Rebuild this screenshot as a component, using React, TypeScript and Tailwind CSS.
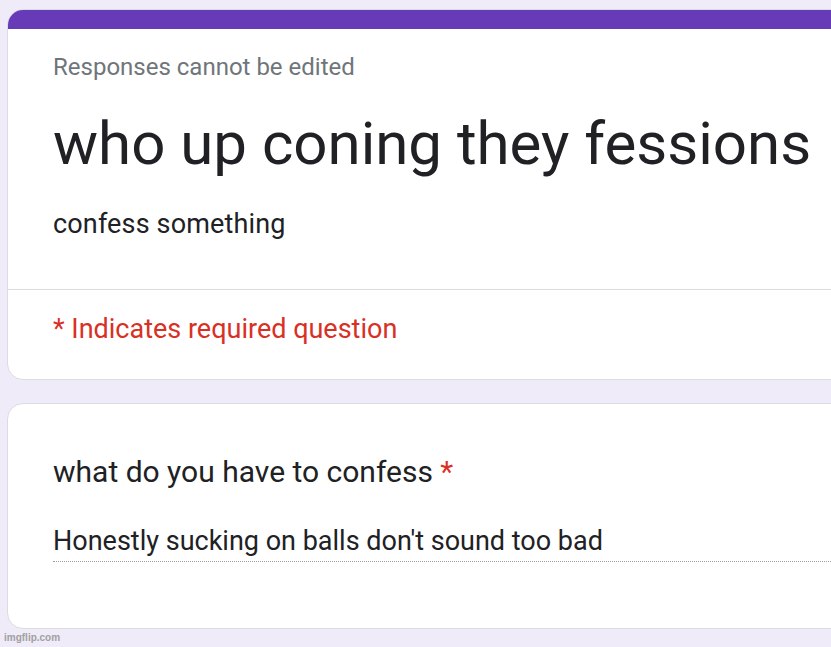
export default function App() {
  return (
    <div
      className="relative w-[831px] h-[647px] overflow-hidden bg-[#f0ebf8]"
      style={{ fontFamily: "Roboto, 'Liberation Sans', sans-serif" }}
    >
      <div className="pt-[9px] pl-[7px]">
        {/* header card */}
        <div className="w-[900px] rounded-2xl border border-[#dadce0] bg-white overflow-hidden">
          <div className="h-[19px] bg-[#673ab7]" />
          <div className="pl-[45px] pt-[26px]">
            <div className="text-[24px] leading-none text-[#70757a]">
              Responses cannot be edited
            </div>
            <h1 className="mt-[35px] text-[60px] leading-none text-[#202124]">
              who up coning they fessions
            </h1>
            <p className="mt-[37px] text-[27px] tracking-[0.15px] leading-none text-[#202124]">
              confess something
            </p>
          </div>
          <div className="mt-[51px] border-t border-[#dadce0]" />
          <div className="pl-[45px] pt-[26px] pb-[36px] text-[27px] leading-none text-[#d93025]">
            * Indicates required question
          </div>
        </div>

        {/* question card */}
        <div className="mt-[23px] w-[900px] rounded-2xl border border-[#dadce0] bg-white pl-[45px] pt-[53px] pb-[66px]">
          <div className="text-[30px] leading-none text-[#202124]">
            what do you have to confess{" "}
            <span className="text-[#d93025]">*</span>
          </div>
          <div className="mt-[41px] w-[830px] border-b border-dotted border-[#9aa0a6] pb-[6px] text-[27px] leading-none text-[#202124]">
            Honestly sucking on balls don't sound too bad
          </div>
        </div>
      </div>

      <div
        className="absolute left-[4px] bottom-[2px] text-[10px] font-bold text-[#a0a0a0]"
        style={{ fontFamily: "'Liberation Sans', Arial, sans-serif" }}
      >
        imgflip.com
      </div>
    </div>
  );
}
